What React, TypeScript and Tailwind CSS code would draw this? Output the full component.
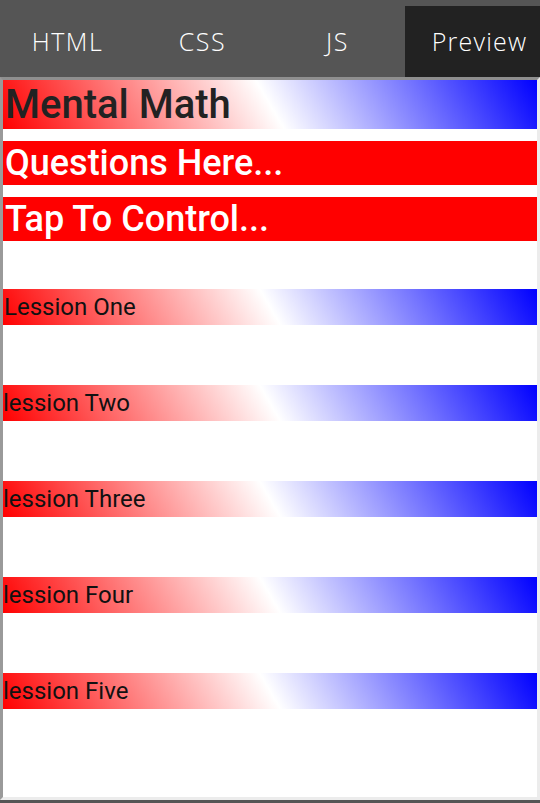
import React from "react";

const lessons = ["Lession One", "lession Two", "lession Three", "lession Four", "lession Five"];

export default function App() {
  return (
    <div className="w-[540px] h-[803px] bg-[#555555] flex flex-col overflow-hidden">
      <div className="h-[77px] flex items-end bg-[#555555]" style={{ fontFamily: '"Open Sans", "DejaVu Sans", sans-serif' }}>
        {["HTML", "CSS", "JS", "Preview"].map((t, i) => (
          <div
            key={t}
            className={
              i === 3
                ? "w-[135px] h-[71px] flex items-center justify-center pl-[14px] text-white text-[25px] tracking-[1.2px] font-light bg-[#222222]"
                : "w-[135px] h-[71px] flex items-center justify-center text-white text-[25px] tracking-[1.5px] font-light"
            }
          >
            {t}
          </div>
        ))}
      </div>
      <div className="h-[723px] bg-white border-t-[3px] border-l-[3px] border-r-[3px] border-b-[3px] border-t-[#8f8f8f] border-l-[#9a9a9a] border-r-[#ececec] border-b-[#ececec] overflow-hidden" style={{ fontFamily: 'Roboto, "Liberation Sans", sans-serif' }}>
        <div className="h-[49px] bg-[linear-gradient(60deg,#ff0000,#ffffff,#0000ff)] text-[#222222] text-[40px] font-medium leading-[49px] pl-[2px] whitespace-nowrap">
          Mental Math
        </div>
        <div className="mt-[12px] h-[44px] bg-[#ff0000] text-white text-[36px] font-medium leading-[44px] pl-[2px] whitespace-nowrap">
          Questions Here...
        </div>
        <div className="mt-[12px] h-[44px] bg-[#ff0000] text-white text-[36px] font-medium leading-[44px] pl-[2px] whitespace-nowrap">
          Tap To Control...
        </div>
        <div className="mt-[48px] flex flex-col gap-[60px]">
          {lessons.map((l, i) => (
            <div
              key={l}
              className={
                i === 0
                  ? "h-[36px] bg-[linear-gradient(60deg,#ff0000,#ffffff,#0000ff)] text-[#111111] text-[24px] leading-[37px] pl-[1px] whitespace-nowrap"
                  : "h-[36px] bg-[linear-gradient(60deg,#ff0000,#ffffff,#0000ff)] text-[#111111] text-[24px] leading-[37px] whitespace-nowrap"
              }
            >
              {l}
            </div>
          ))}
        </div>
      </div>
    </div>
  );
}
